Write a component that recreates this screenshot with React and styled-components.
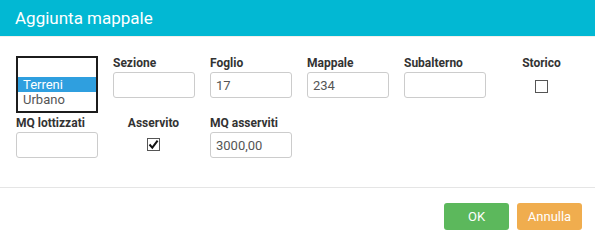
import React from 'react';
import styled, { createGlobalStyle } from 'styled-components';

const GlobalStyle = createGlobalStyle`
  html, body {
    margin: 0;
    padding: 0;
    background: #fff;
  }
  body {
    font-family: Roboto, "Liberation Sans", Arial, sans-serif;
  }
`;

export default function App() {
  return (
    <Modal>
      <GlobalStyle />
      <Header>
        <Title>Aggiunta mappale</Title>
      </Header>
      <Body>
        <FieldGrid>
          <ListBox>
            <Option $selected>Terreni</Option>
            <Option>Urbano</Option>
          </ListBox>
          <Field>
            <Label>Sezione</Label>
            <Input defaultValue="" />
          </Field>
          <Field>
            <Label>Foglio</Label>
            <Input defaultValue="17" />
          </Field>
          <Field>
            <Label>Mappale</Label>
            <Input defaultValue="234" />
          </Field>
          <Field>
            <Label>Subalterno</Label>
            <Input defaultValue="" />
          </Field>
          <Field $center>
            <Label>Storico</Label>
            <CheckBox $top={8} />
          </Field>

          <Field>
            <Label>MQ lottizzati</Label>
            <Input defaultValue="" />
          </Field>
          <Field $center>
            <Label>Asservito</Label>
            <CheckBox $top={6}>
              <svg width="11" height="11" viewBox="0 0 11 11">
                <path d="M1.5 5.5 L4.3 8.6 L9.6 1.6" fill="none" stroke="#111" strokeWidth="2" />
              </svg>
            </CheckBox>
          </Field>
          <Field>
            <Label>MQ asserviti</Label>
            <Input defaultValue="3000,00" />
          </Field>
        </FieldGrid>
      </Body>
      <Footer>
        <Button $color="#5cb85c">OK</Button>
        <Button $color="#f0ad4e">Annulla</Button>
      </Footer>
    </Modal>
  );
}

const Modal = styled.div`
  width: 595px;
  height: 240px;
  background: #fff;
  display: flex;
  flex-direction: column;
`;

const Header = styled.div`
  height: 36px;
  background: #02b8d3;
  border-bottom: 1px solid #f2f0ea;
  display: flex;
  align-items: center;
  padding: 0 15px;
`;

const Title = styled.h4`
  margin: 0;
  color: #fff;
  font-size: 17px;
  font-weight: 400;
`;

const Body = styled.div`
  padding: 19px 13px 29px 16px;
  border-bottom: 1px solid #e5e5e5;
`;

const FieldGrid = styled.div`
  display: grid;
  grid-template-columns: repeat(6, 81px);
  column-gap: 16px;
  row-gap: 3px;
  align-items: start;
`;

const ListBox = styled.div`
  width: 78px;
  height: 34px;
  padding-top: 19px;
  border: 2px solid #1c1c1c;
`;

const Option = styled.div`
  height: 15px;
  line-height: 15px;
  padding-left: 5px;
  font-size: 13px;
  color: ${(p) => (p.$selected ? '#fff' : '#555')};
  background: ${(p) => (p.$selected ? '#2f9fdf' : 'transparent')};
`;

const Field = styled.div`
  display: flex;
  flex-direction: column;
  align-items: ${(p) => (p.$center ? 'center' : 'stretch')};
`;

const Label = styled.label`
  font-size: 12px;
  font-weight: 700;
  color: #333;
  line-height: 14px;
  margin-bottom: 2px;
  white-space: nowrap;
`;

const Input = styled.input`
  box-sizing: border-box;
  width: 82px;
  height: 26px;
  border: 1px solid #ccc;
  border-radius: 3px;
  padding: 0 5px;
  font-family: inherit;
  font-size: 13px;
  color: #555;
  outline: none;
`;

const CheckBox = styled.span`
  box-sizing: border-box;
  width: 13px;
  height: 13px;
  margin-top: ${(p) => p.$top}px;
  border: 1px solid #555;
  background: #fff;
  display: flex;
  align-items: center;
  justify-content: center;
`;

const Footer = styled.div`
  flex: 1;
  display: flex;
  justify-content: flex-end;
  align-items: flex-start;
  gap: 8px;
  padding: 15px 13px 0 0;
`;

const Button = styled.button`
  width: 65px;
  height: 27px;
  border: none;
  border-radius: 3px;
  background: ${(p) => p.$color};
  color: #fff;
  font-family: inherit;
  font-size: 13px;
  cursor: pointer;
`;
